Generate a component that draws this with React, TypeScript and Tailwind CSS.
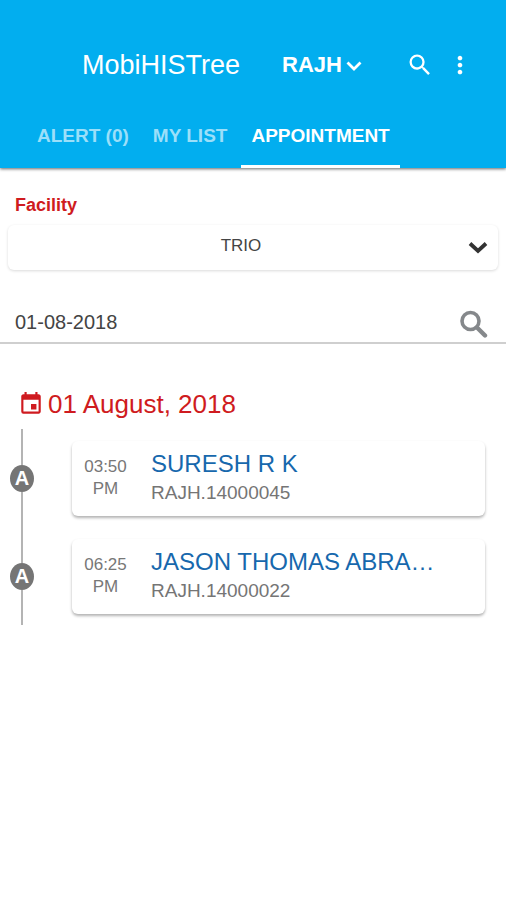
import React from "react";
import { MdEvent, MdMoreVert, MdSearch } from "react-icons/md";

interface Appointment {
  time: string;
  period: string;
  name: string;
  id: string;
}

const appointments: Appointment[] = [
  { time: "03:50", period: "PM", name: "SURESH R K", id: "RAJH.14000045" },
  { time: "06:25", period: "PM", name: "JASON THOMAS ABRA…", id: "RAJH.14000022" },
];

const tabs = ["ALERT (0)", "MY LIST", "APPOINTMENT"];

const Header: React.FC = () => (
  <header className="relative bg-[#02aeef] pt-10 text-white shadow-[0_1px_3px_rgba(0,0,0,0.6)]">
    <div className="flex h-[50px] items-center pr-8 pl-[82px]">
      <h1 className="text-[27px] leading-8">MobiHISTree</h1>
      <button
        type="button"
        className="ml-[42px] flex items-center gap-1 text-[22px] leading-8 font-bold"
      >
        RAJH
        <svg viewBox="0 0 16 12" className="h-3 w-4" fill="none" aria-hidden="true">
          <path d="M1.5 3.5 8 10 14.5 3.5" stroke="currentColor" strokeWidth="2.8" />
        </svg>
      </button>
      <button type="button" aria-label="Search" className="ml-auto">
        <MdSearch className="size-7" />
      </button>
      <button type="button" aria-label="More options" className="ml-3">
        <MdMoreVert className="size-7" />
      </button>
    </div>
    <nav className="flex gap-1 pl-[27px]">
      {tabs.map((tab) => (
        <button
          key={tab}
          type="button"
          className={
            tab === "APPOINTMENT"
              ? "h-[78px] border-b-3 border-white px-[10px] pt-4 text-[19px] leading-6 font-bold"
              : "h-[78px] border-b-3 border-transparent px-[10px] pt-4 text-[19px] leading-6 font-bold text-[#9bdff9]"
          }
        >
          {tab}
        </button>
      ))}
    </nav>
  </header>
);

const Filters: React.FC = () => (
  <form className="pt-[25px]">
    <label htmlFor="facility" className="block pl-[15px] text-[18px] leading-6 font-bold text-[#cf1b20]">
      Facility
    </label>
    <div className="relative mx-2 mt-2">
      <select
        id="facility"
        className="h-[45px] w-full appearance-none rounded-md bg-white pr-6 pb-1 text-[17px] text-[#444] shadow-[0_1px_3px_rgba(0,0,0,0.15)] [text-align-last:center]"
      >
        <option>TRIO</option>
      </select>
      <svg
        viewBox="0 0 20 14"
        className="pointer-events-none absolute top-4 right-[10px] h-[14px] w-5"
        fill="none"
        aria-hidden="true"
      >
        <path d="M2 2.5 10 10 18 2.5" stroke="#333" strokeWidth="3.8" />
      </svg>
    </div>
    <div className="mt-8 flex h-[42px] items-center border-b-2 border-[#cfcfcf] pr-[18px] pl-[15px]">
      <input
        type="text"
        aria-label="Date"
        defaultValue="01-08-2018"
        className="min-w-0 flex-1 text-[20px] leading-6 text-[#444] outline-none"
      />
      <button type="button" aria-label="Search date" className="pt-1">
        <svg viewBox="0 0 28 28" className="size-7" fill="none" stroke="#85888b" aria-hidden="true">
          <circle cx="10.5" cy="11" r="8.5" strokeWidth="3.6" />
          <path d="M17 17.5 25 25.5" strokeWidth="4.4" strokeLinecap="round" />
        </svg>
      </button>
    </div>
  </form>
);

const AppointmentRow: React.FC<Appointment> = ({ time, period, name, id }) => (
  <li className="flex h-[98px] items-center">
    <div className="flex h-full w-6 shrink-0 flex-col items-center">
      <span className="w-[2px] flex-1 bg-[#b4b4b4]" />
      <span className="flex h-[27px] w-6 items-center justify-center rounded-[50%] bg-[#757575] text-[20px] leading-6 font-bold text-white">
        A
      </span>
      <span className="w-[2px] flex-1 bg-[#b4b4b4]" />
    </div>
    <article className="ml-[38px] flex h-[75px] min-w-0 flex-1 items-center rounded-md bg-white shadow-[0_2px_3px_rgba(0,0,0,0.3)]">
      <p className="w-[67px] shrink-0 text-center text-[17px] leading-[22px] text-[#777]">
        {time}
        <br />
        {period}
      </p>
      <div className="ml-3 min-w-0 flex-1">
        <h3 className="truncate text-[24px] leading-[29px] text-[#1768ad]">{name}</h3>
        <p className="text-[19px] leading-[29px] text-[#757575]">{id}</p>
      </div>
    </article>
  </li>
);

const App: React.FC = () => (
  <div className="min-h-screen bg-white font-['Liberation_Sans',Arial,sans-serif]">
    <Header />
    <main>
      <Filters />
      <section className="pt-11 pr-[21px] pl-[10px]">
        <h2 className="flex items-center gap-1 pl-2 text-[26px] leading-8 text-[#cf1b20]">
          <MdEvent className="size-[26px]" />
          01 August, 2018
        </h2>
        <ol className="mt-[9px]">
          {appointments.map((item) => (
            <AppointmentRow key={item.id} {...item} />
          ))}
        </ol>
      </section>
    </main>
  </div>
);

export default App;
